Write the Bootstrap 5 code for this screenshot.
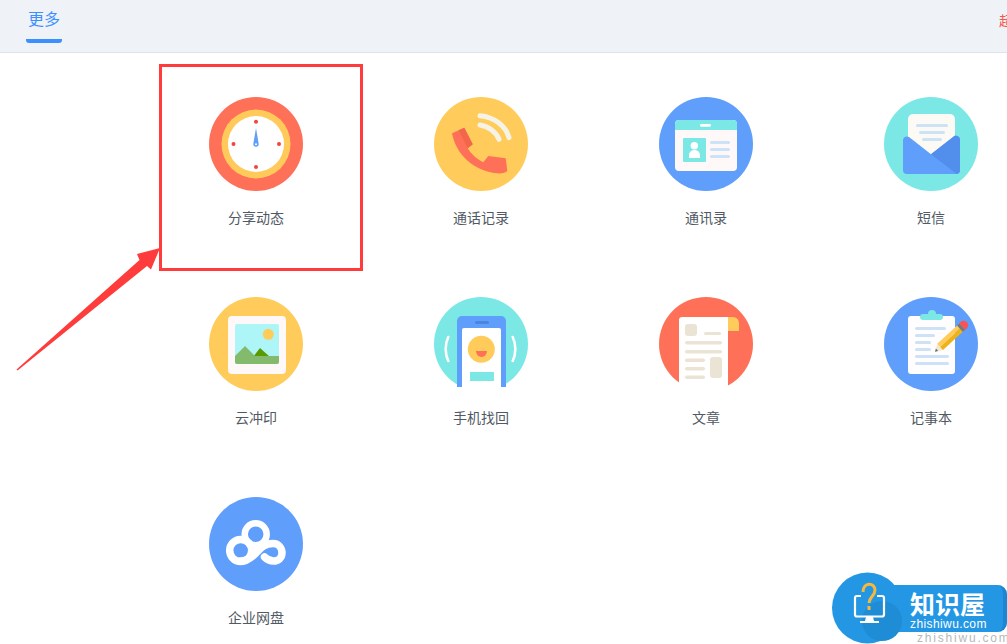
<!DOCTYPE html>
<html lang="zh-CN">
<head>
  <meta charset="UTF-8" />
  <meta name="viewport" content="width=device-width, initial-scale=1.0"/>
  <title>更多</title>
  <link href="https://cdn.jsdelivr.net/npm/bootstrap@5.3.0/dist/css/bootstrap.min.css" rel="stylesheet"/>
  <style>
    html, body {
      height: 644px;
      overflow: hidden;
    }
    body {
      background: #fff;
      font-family: "Liberation Sans", "Noto Sans CJK SC", sans-serif;
      position: relative;
    }
    .top-strip {
      height: 53px;
      background: #eff3f8;
      border-bottom: 1px solid #dde2ec;
      padding-left: 26px;
      overflow: hidden;
    }
    .tab-item {
      width: 36px;
      height: 43px;
      color: #3c8fff;
      font-size: 16px;
      line-height: 20px;
      padding-top: 10px;
      text-align: center;
      border-bottom: 4px solid #3c8fff;
      border-radius: 0 0 3px 3px;
      white-space: nowrap;
    }
    .promo-text {
      color: #f5574c;
      font-size: 14px;
      line-height: 20px;
      margin-top: 11px;
      margin-right: -48px;
      white-space: nowrap;
    }
    .app-grid {
      display: grid;
      grid-template-columns: repeat(4, 225px);
      grid-auto-rows: 200px;
      margin-left: 143.5px;
      width: 900px;
    }
    .app-cell {
      padding-top: 44px;
    }
    .app-cell svg {
      display: block;
    }
    .app-label {
      color: #515964;
      font-size: 14px;
      line-height: 20px;
      margin-top: 17px;
    }
    .pick-box {
      position: absolute;
      left: 159px;
      top: 64px;
      width: 204px;
      height: 207px;
      border: 3px solid #ff3b3b;
    }
    .pick-arrow {
      position: absolute;
      left: 0;
      top: 230px;
    }
    .wm-wrap {
      position: absolute;
      left: 832px;
      top: 571px;
      width: 175px;
      height: 73px;
    }
    .wm-bar {
      position: absolute;
      left: 30px;
      top: 14px;
      width: 145px;
      height: 47px;
      background: #2397e4;
      border-right: 4px solid #1c86d2;
      border-radius: 0 9px 9px 0;
    }
    .wm-disc {
      position: absolute;
      left: 0;
      top: 0;
    }
    .wm-name {
      position: absolute;
      left: 78px;
      top: 18px;
      color: #fff;
      font-family: "Noto Sans CJK SC", sans-serif;
      font-size: 25px;
      font-weight: 700;
      line-height: 28px;
    }
    .wm-url {
      position: absolute;
      left: 78px;
      top: 47px;
      color: #fff;
      font-size: 12px;
      line-height: 13px;
      letter-spacing: .4px;
    }
    .wm-url-under {
      position: absolute;
      left: 85px;
      top: 61px;
      color: #b4b8bb;
      font-size: 12px;
      line-height: 12px;
      letter-spacing: 1.8px;
    }
  </style>
</head>
<body>

<div class="top-strip d-flex justify-content-between">
  <div class="tab-item">更多</div>
  <div class="promo-text">超级会员</div>
</div>

<div class="app-grid">

  <div class="app-cell d-flex flex-column align-items-center">
    <svg width="94" height="94" viewBox="0 0 94 94">
      <circle cx="47" cy="47" r="47" fill="#ff7058"/>
      <circle cx="47" cy="47" r="34.5" fill="#ffca5a"/>
      <circle cx="47" cy="47" r="28" fill="#fff"/>
      <g fill="#f4433f">
        <circle cx="47" cy="24.7" r="2"/>
        <circle cx="47" cy="70" r="2"/>
        <circle cx="24.5" cy="47" r="2"/>
        <circle cx="70" cy="47" r="2"/>
      </g>
      <path d="M47 31 L49.700 47 A2.700 2.700 0 1 1 44.300 47 Z" fill="#5f9efb"/>
      <circle cx="47" cy="47.3" r="1" fill="#fff"/>
    </svg>
    <div class="app-label">分享动态</div>
  </div>

  <div class="app-cell d-flex flex-column align-items-center">
    <svg width="94" height="94" viewBox="0 0 94 94">
      <circle cx="47" cy="47" r="47" fill="#ffcc5c"/>
      <path d="M18 36.3 L30.3 30.7 L38.7 47.3 L33.7 51.3 C37 57 43 62 49.3 65.3 L54.3 59 L71.7 61.3 L73.3 74 C70 76.5 66 76.5 62.7 76.3 C40 74 22 58 18 36.3 Z" fill="#ff7058"/>
      <path d="M24.7 33.3 L30.3 30.7 L38.7 47.3 L33.7 51.3 Z" fill="#f4664b"/>
      <g fill="none" stroke="#f5f3e6" stroke-width="5" stroke-linecap="round">
        <path d="M46 18.7 C60 20 72 29 75 40.7"/>
        <path d="M46 28 C54 29 62 35 65 42.3"/>
      </g>
    </svg>
    <div class="app-label">通话记录</div>
  </div>

  <div class="app-cell d-flex flex-column align-items-center">
    <svg width="94" height="94" viewBox="0 0 94 94">
      <circle cx="47" cy="47" r="47" fill="#5f9efb"/>
      <rect x="16" y="23" width="62" height="51" rx="4" fill="#fff8f8"/>
      <path d="M16 33 V27 A4 4 0 0 1 20 23 H74 A4 4 0 0 1 78 27 V33 Z" fill="#7be8e6"/>
      <rect x="41" y="27" width="11" height="2.8" rx="1.4" fill="#fff"/>
      <rect x="24" y="41" width="23" height="24" rx="1" fill="#7be8e6"/>
      <circle cx="35.3" cy="48.7" r="3.7" fill="#fff"/>
      <path d="M30 61 V58 A5.500 5 0 0 1 41 58 V61 Z" fill="#fff"/>
      <g fill="#cde2f7">
        <rect x="51" y="44" width="20" height="3" rx="1.5"/>
        <rect x="51" y="51" width="20" height="3" rx="1.5"/>
        <rect x="51" y="58" width="20" height="3" rx="1.5"/>
      </g>
    </svg>
    <div class="app-label">通讯录</div>
  </div>

  <div class="app-cell d-flex flex-column align-items-center">
    <svg width="94" height="94" viewBox="0 0 94 94">
      <circle cx="47" cy="47" r="47" fill="#7be8e6"/>
      <path d="M24 60 V22 A5 5 0 0 1 29 17 H66 A5 5 0 0 1 71 22 V60 Z" fill="#fbfaf4"/>
      <g fill="#cde2f7">
        <rect x="32" y="27" width="32" height="3" rx="1.5"/>
        <rect x="35" y="34" width="26" height="3" rx="1.5"/>
        <rect x="38" y="41" width="20" height="3" rx="1.5"/>
      </g>
      <path d="M19 43 A4 4 0 0 1 25 40 L47 57.3 L69 40 A4 4 0 0 1 76 43 V73 A4 4 0 0 1 72 77 H23 A4 4 0 0 1 19 73 Z" fill="#5f9efb"/>
      <path d="M47 57.3 L69.500 39.800 A4 4 0 0 1 76 43 V73 A4 4 0 0 1 72.700 77 Z" fill="#528fec"/>
    </svg>
    <div class="app-label">短信</div>
  </div>

  <div class="app-cell d-flex flex-column align-items-center">
    <svg width="94" height="94" viewBox="0 0 94 94">
      <circle cx="47" cy="47" r="47" fill="#ffcc5c"/>
      <rect x="19" y="19" width="58" height="58" rx="4" fill="#fff8f8"/>
      <rect x="26" y="27" width="44" height="40" rx="2" fill="#aef5f7"/>
      <circle cx="59.3" cy="37.3" r="5.5" fill="#ffcc5c"/>
      <path d="M44 60 L51 51 L61 60 Z" fill="#5a9a00"/>
      <path d="M26 59 L36 49 L46 59 H70 V65 A2 2 0 0 1 68 67 H28 A2 2 0 0 1 26 65 Z" fill="#84ba6c"/>
    </svg>
    <div class="app-label">云冲印</div>
  </div>

  <div class="app-cell d-flex flex-column align-items-center">
    <svg width="94" height="94" viewBox="0 0 94 94">
      <circle cx="47" cy="47" r="47" fill="#7be8e6"/>
      <rect x="23" y="90" width="49" height="4" fill="#fff"/>
      <path d="M23 90 V24 A5 5 0 0 1 28 19 H67 A5 5 0 0 1 72 24 V90 Z" fill="#5f9efb"/>
      <path d="M28 94 V33 A2 2 0 0 1 30 31 H65 A2 2 0 0 1 67 33 V94 Z" fill="#fff"/>
      <rect x="41" y="24" width="14" height="3" rx="1.5" fill="#4a86dd"/>
      <circle cx="47.3" cy="52.3" r="13.5" fill="#ffcc5c"/>
      <path d="M42 54 H53 A5.500 6 0 0 1 42 54 Z" fill="#ff7058"/>
      <rect x="36" y="75" width="24" height="9" fill="#7be8e6"/>
      <g fill="none" stroke="#fff" stroke-width="2.6" stroke-linecap="round">
        <path d="M14.3 40 C10.8 47 10.8 57 14.3 64"/>
        <path d="M78.7 40 C82.2 47 82.2 57 78.7 64"/>
      </g>
    </svg>
    <div class="app-label">手机找回</div>
  </div>

  <div class="app-cell d-flex flex-column align-items-center">
    <svg width="94" height="94" viewBox="0 0 94 94">
      <circle cx="47" cy="47" r="47" fill="#ff7058"/>
      <path d="M20 94 V23 A3 3 0 0 1 23 20 H69 V94 Z" fill="#fff"/>
      <path d="M69 34 V20 H74 A6 6 0 0 1 80 26 V34 Z" fill="#ffcc5c"/>
      <g fill="#ebe3d3">
        <rect x="26" y="27" width="12" height="12" rx="3"/>
        <rect x="45" y="35" width="17" height="3" rx="1.5"/>
        <rect x="26" y="44" width="37" height="3.4" rx="1.7"/>
        <rect x="26" y="53" width="37" height="3.4" rx="1.7"/>
        <rect x="26" y="61.5" width="20" height="3.4" rx="1.7"/>
        <rect x="26" y="70" width="20" height="3.4" rx="1.7"/>
        <rect x="26" y="78.5" width="20" height="3.4" rx="1.7"/>
        <rect x="51" y="60" width="12" height="21" rx="3"/>
      </g>
    </svg>
    <div class="app-label">文章</div>
  </div>

  <div class="app-cell d-flex flex-column align-items-center">
    <svg width="94" height="94" viewBox="0 0 94 94">
      <circle cx="47" cy="47" r="47" fill="#5f9efb"/>
      <rect x="24" y="19" width="47" height="58" rx="3" fill="#fffdfd"/>
      <rect x="36" y="17" width="23" height="6" rx="3" fill="#7be8e6"/>
      <circle cx="48" cy="17" r="4" fill="#7be8e6"/>
      <g fill="#cde2f7">
        <rect x="31" y="30" width="31" height="3" rx="1.5"/>
        <rect x="31" y="37" width="20" height="3" rx="1.5"/>
        <rect x="31" y="44" width="16" height="3" rx="1.5"/>
        <rect x="31" y="51" width="16" height="3" rx="1.5"/>
        <rect x="31" y="58" width="34" height="3" rx="1.5"/>
        <rect x="31" y="65" width="34" height="3" rx="1.5"/>
      </g>
      <g transform="translate(51 54.7) rotate(-42.8)">
        <path d="M0 0 L7 -4.200 V4.200 Z" fill="#f3e9d2"/>
        <path d="M0 0 L2.800 -1.700 V1.700 Z" fill="#6b6b6b"/>
        <rect x="7" y="-4.2" width="27" height="4.2" fill="#ffcc5c"/>
        <rect x="7" y="0" width="27" height="4.2" fill="#efb317"/>
        <rect x="34" y="-4.2" width="3" height="8.4" fill="#787878"/>
        <path d="M37 -4.500 H39 A4.500 4.500 0 0 1 39 4.500 H37 Z" fill="#fb5350"/>
      </g>
    </svg>
    <div class="app-label">记事本</div>
  </div>

  <div class="app-cell d-flex flex-column align-items-center">
    <svg width="94" height="94" viewBox="0 0 94 94">
      <circle cx="47" cy="47" r="47" fill="#5f9efb"/>
      <g fill="none" stroke="#fff">
        <circle cx="46.7" cy="37.3" r="11" stroke-width="6.500"/>
        <circle cx="31.7" cy="53.5" r="11" stroke-width="7.500"/>
        <path d="M31.7 64 C39 64 43.500 60 48 55 C52 50.500 56 46.500 64 46.500 C70 46.500 73 51.500 73 56 C73 60.500 69.500 64 64.500 64 C60.500 64 57.500 62 55.500 60" stroke-width="7.500" stroke-linecap="round"/>
      </g>
      <path d="M36 42 L42 47 L50 50 L44 56 L38 50 Z" fill="#fff"/>
    </svg>
    <div class="app-label">企业网盘</div>
  </div>

</div>

<!-- red annotation -->
<div class="pick-box"></div>
<svg class="pick-arrow" width="170" height="150" viewBox="0 0 170 150">
  <path d="M16.500 139.500 L17.500 140.500 L147 36 L151 39.500 L160 18 L137 24 L139.500 30 Z" fill="#ff3c3c"/>
</svg>

<!-- watermark -->
<div class="wm-wrap">
  <div class="wm-bar"></div>
  <svg class="wm-disc" width="76" height="73" viewBox="0 0 76 73">
    <circle cx="35.5" cy="37" r="35.500" fill="#2397e4"/>
    <circle cx="50" cy="50" r="20" fill="#1f8cd6"/>
    <path d="M29 25 H25 A2 2 0 0 0 23 27 V43.500 A2 2 0 0 0 25 45.500 H50 A2 2 0 0 0 52 43.500 V27 A2 2 0 0 0 50 25 H45" fill="none" stroke="#fff" stroke-width="2.200"/>
    <path d="M34 46 H41 L42 50 H47 V52 H28 V50 H33 Z" fill="#fff"/>
    <path d="M31 21 C31 11 43 11 43 19 C43 25 37 26 37 32 M37 35 V39" fill="none" stroke="#f6b93b" stroke-width="3"/>
  </svg>
  <div class="wm-name">知识屋</div>
  <div class="wm-url">zhishiwu.com</div>
  <div class="wm-url-under">zhishiwu.com</div>
</div>

<script src="https://cdn.jsdelivr.net/npm/bootstrap@5.3.0/dist/js/bootstrap.bundle.min.js"></script>
</body>
</html>
